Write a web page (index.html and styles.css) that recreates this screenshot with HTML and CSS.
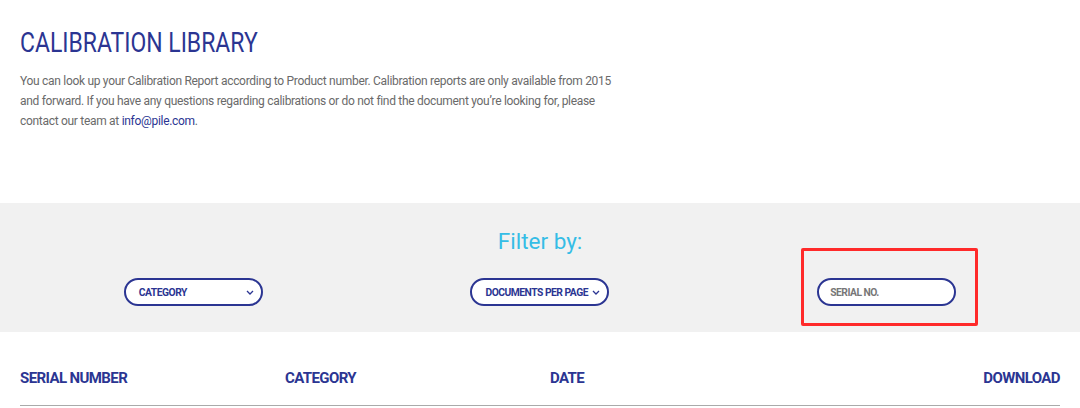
FILE: index.html
```html
<!DOCTYPE html>
<html lang="en">
<head>
    <meta charset="UTF-8">
    <meta name="viewport" content="width=device-width, initial-scale=1.0">
    <title>Calibration Library</title>
    <link rel="stylesheet" href="styles.css">
</head>
<body>
    <div class="intro">
        <h1>CALIBRATION LIBRARY</h1>
        <p>You can look up your Calibration Report according to Product number. Calibration reports are only available from 2015 and forward. If you have any questions regarding calibrations or do not find the document you’re looking for, please contact our team at <a href="#">info@pile.com</a>.</p>
    </div>

    <div class="filter-band">
        <h2>Filter by:</h2>
        <div class="filters">
            <div class="filter-cell">
                <div class="pill">
                    <span>CATEGORY</span>
                    <svg class="chev" width="8" height="5" viewBox="0 0 8 5"><path d="M1 1l3 3 3-3" fill="none" stroke="#2b3592" stroke-width="1.3"/></svg>
                </div>
            </div>
            <div class="filter-cell">
                <div class="pill">
                    <span>DOCUMENTS PER PAGE</span>
                    <svg class="chev" width="8" height="5" viewBox="0 0 8 5"><path d="M1 1l3 3 3-3" fill="none" stroke="#2b3592" stroke-width="1.3"/></svg>
                </div>
            </div>
            <div class="filter-cell">
                <div class="pill input">
                    <span>SERIAL NO.</span>
                </div>
                <div class="highlight"></div>
            </div>
        </div>
    </div>

    <div class="table-head">
        <div>SERIAL NUMBER</div>
        <div>CATEGORY</div>
        <div>DATE</div>
        <div class="right">DOWNLOAD</div>
    </div>
</body>
</html>
```

FILE: styles.css
```css
body {
    margin: 0;
    font-family: Roboto, "Liberation Sans", sans-serif;
    background: #ffffff;
    color: #666666;
}
.intro {
    padding: 27px 20px 0 20px;
    height: 203px;
    box-sizing: border-box;
}
h1 {
    display: inline-block;
    margin: 0;
    font-size: 27px;
    font-weight: 400;
    color: #2b3592;
    transform: scaleX(0.85);
    transform-origin: left center;
}
.intro p {
    margin: 12px 0 0 0;
    width: 592px;
    font-size: 12px;
    line-height: 20px;
    letter-spacing: -0.3px;
    color: #6a6a6a;
}
.intro a {
    color: #2b3592;
    text-decoration: none;
}
.filter-band {
    background: #f1f1f1;
    height: 129px;
    padding: 0 20px;
}
h2 {
    margin: 0;
    padding-top: 24px;
    text-align: center;
    font-size: 22.5px;
    font-weight: 400;
    color: #35bde6;
    line-height: 28px;
}
.filters {
    display: grid;
    grid-template-columns: 1fr 1fr 1fr;
    margin-top: 23px;
}
.filter-cell {
    display: flex;
    justify-content: center;
    position: relative;
}
.pill {
    box-sizing: border-box;
    width: 139px;
    height: 28px;
    border: 2px solid #2b3592;
    border-radius: 14px;
    background: #ffffff;
    display: flex;
    align-items: center;
    justify-content: space-between;
    padding: 0 7px 0 13px;
    font-size: 10.3px;
    font-weight: 700;
    color: #2b3592;
    letter-spacing: -0.5px;
    white-space: nowrap;
}
.pill.input {
    color: #777777;
    padding-left: 11px;
}
.chev {
    flex: none;
}
.highlight {
    position: absolute;
    left: 88px;
    top: -30px;
    width: 177px;
    height: 78px;
    box-sizing: border-box;
    border: 3px solid #ff2a2a;
    border-radius: 2px;
}
.table-head {
    display: grid;
    grid-template-columns: 265px 265px 1fr auto;
    margin: 0 20px;
    padding-top: 37px;
    padding-bottom: 18px;
    border-bottom: 1.5px solid #aaaaaa;
    font-size: 15px;
    font-weight: 700;
    color: #2b3592;
    letter-spacing: -0.6px;
}
.right {
    text-align: right;
}
```
